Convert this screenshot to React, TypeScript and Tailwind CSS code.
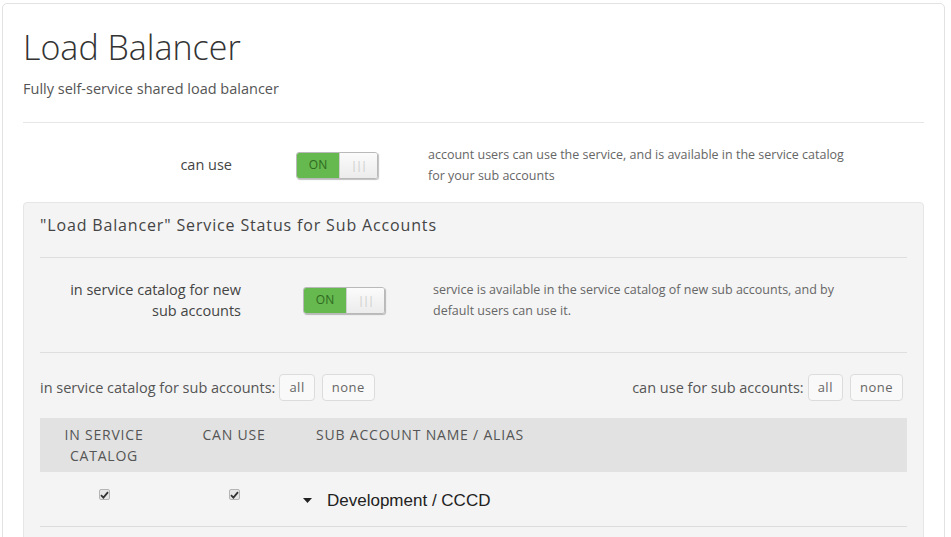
import React from 'react';

function Toggle() {
  return (
    <div className="flex h-[27px] w-[82px] shrink-0 overflow-hidden rounded-[3px] border border-[#b9b9b9] shadow-[1px_1px_1px_rgba(0,0,0,0.25)]">
      <div className="flex w-[42px] items-center justify-center bg-[#66b94e] text-[12px] text-[#2f6a22]">ON</div>
      <div className="flex flex-1 items-center justify-center border-l border-[#cfcfcf] bg-gradient-to-b from-[#fbfbfb] to-[#ececec] text-[11px] tracking-[-1px] text-[#c9c9c9]">|||</div>
    </div>
  );
}

function Check() {
  return (
    <span className="inline-flex h-[11px] w-[11px] items-center justify-center rounded-[2px] border border-[#b5b5b5] bg-[#e6e6e6]">
      <svg width="9" height="8" viewBox="0 0 9 8">
        <path d="M1 4.2 L3.4 6.6 L8 1.2" fill="none" stroke="#333" strokeWidth="1.8" />
      </svg>
    </span>
  );
}

function SmallButton({ label }: { label: string }) {
  return (
    <button className="h-[27px] rounded-[4px] border border-[#dcdcdc] bg-[#f9f9f9] px-[9px] text-[13px] tracking-[0.5px] text-[#666]">
      {label}
    </button>
  );
}

export default function App() {
  return (
    <div className="h-[537px] overflow-hidden bg-white pl-[2px] pr-[6px] pt-[3px] font-['Open_Sans',sans-serif]">
      <div className="rounded-[5px] border border-[#e2e2e2] px-[20px] pt-[23px]">
        <h1 className="text-[34px] font-light leading-[40px] text-[#333]">Load Balancer</h1>
        <p className="mt-[12px] text-[14.5px] leading-[20px] text-[#555]">Fully self-service shared load balancer</p>
        <div className="mt-[23px] h-px bg-[#e6e6e6]" />

        <div className="flex items-center pb-[16px] pt-[21px]">
          <div className="w-[209px] text-right text-[14.5px] text-[#444]">can use</div>
          <div className="ml-[64px]">
            <Toggle />
          </div>
          <div className="ml-[50px] text-[12.5px] leading-[21px] text-[#666]">
            account users can use the service, and is available in the service catalog
            <br />
            for your sub accounts
          </div>
        </div>

        <div className="rounded-[4px] border border-[#e6e6e6] bg-[#f4f4f4] px-[16px]">
          <div className="pb-[21px] pt-[11px] text-[16px] leading-[22px] tracking-[0.85px] text-[#444]">
            "Load Balancer" Service Status for Sub Accounts
          </div>
          <div className="h-px bg-[#dedede]" />

          <div className="flex items-center pb-[31px] pt-[21px]">
            <div className="w-[201px] text-right text-[14.5px] leading-[21px] text-[#444]">
              in service catalog for new
              <br />
              sub accounts
            </div>
            <div className="ml-[62px]">
              <Toggle />
            </div>
            <div className="ml-[48px] text-[12.5px] leading-[21px] text-[#666]">
              service is available in the service catalog of new sub accounts, and by
              <br />
              default users can use it.
            </div>
          </div>
          <div className="h-px bg-[#dedede]" />

          <div className="flex items-center justify-between pt-[21px]">
            <div className="flex items-center gap-[4px]">
              <span className="text-[14.5px] text-[#555]">in service catalog for sub accounts:</span>
              <div className="flex gap-[7px]">
                <SmallButton label="all" />
                <SmallButton label="none" />
              </div>
            </div>
            <div className="mr-[4px] flex items-center gap-[4px]">
              <span className="text-[14.5px] text-[#555]">can use for sub accounts:</span>
              <div className="flex gap-[7px]">
                <SmallButton label="all" />
                <SmallButton label="none" />
              </div>
            </div>
          </div>

          <div className="mt-[17px] grid h-[54px] grid-cols-[128px_132px_1fr] bg-[#e2e2e2] pt-[6px] text-[14px] uppercase leading-[21px] tracking-[0.8px] text-[#555]">
            <div className="text-center">In service<br />catalog</div>
            <div className="text-center">Can use</div>
            <div className="pl-[16px]">Sub account name / alias</div>
          </div>

          <div className="grid h-[55px] grid-cols-[128px_132px_1fr] border-b border-[#dcdcdc]">
            <div className="flex justify-center pt-[17px]">
              <Check />
            </div>
            <div className="flex justify-center pt-[17px]">
              <Check />
            </div>
            <div className="flex items-center gap-[15px] pl-[3px] pt-[3px] font-['Liberation_Sans',sans-serif] text-[17px] text-[#222]">
              <svg width="9" height="5" viewBox="0 0 9 5">
                <path d="M0 0 H9 L4.5 5 Z" fill="#222" />
              </svg>
              <span>Development / CCCD</span>
            </div>
          </div>
          <div className="h-[30px]" />
        </div>
      </div>
    </div>
  );
}
